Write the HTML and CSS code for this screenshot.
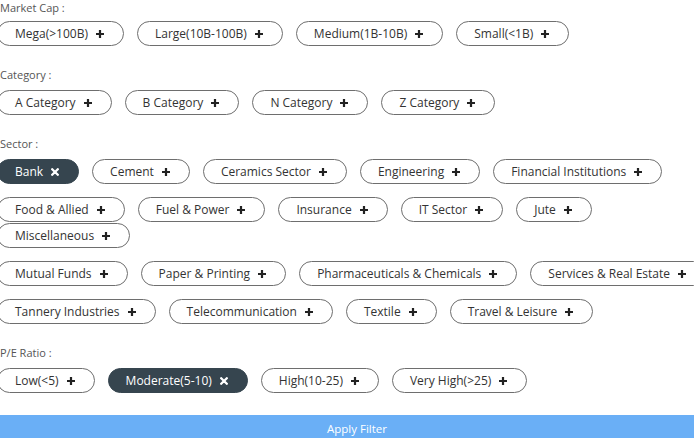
FILE: index.html
```html
<!DOCTYPE html>
<html>
<head>
<meta charset="utf-8">
<link rel="stylesheet" href="styles.css">
</head>
<body>
<div class="page">
  <section class="group first">
    <div class="label">Market Cap :</div>
    <div class="row">
      <span class="chip">Mega(&gt;100B)<svg class="ico" viewBox="0 0 8 8"><path d="M2.9 0h2.2v2.9H8v2.2H5.1V8H2.9V5.1H0V2.9h2.9z"/></svg></span>
      <span class="chip">Large(10B-100B)<svg class="ico" viewBox="0 0 8 8"><path d="M2.9 0h2.2v2.9H8v2.2H5.1V8H2.9V5.1H0V2.9h2.9z"/></svg></span>
      <span class="chip">Medium(1B-10B)<svg class="ico" viewBox="0 0 8 8"><path d="M2.9 0h2.2v2.9H8v2.2H5.1V8H2.9V5.1H0V2.9h2.9z"/></svg></span>
      <span class="chip">Small(&lt;1B)<svg class="ico" viewBox="0 0 8 8"><path d="M2.9 0h2.2v2.9H8v2.2H5.1V8H2.9V5.1H0V2.9h2.9z"/></svg></span>
    </div>
  </section>

  <section class="group">
    <div class="label">Category :</div>
    <div class="row">
      <span class="chip">A Category<svg class="ico" viewBox="0 0 8 8"><path d="M2.9 0h2.2v2.9H8v2.2H5.1V8H2.9V5.1H0V2.9h2.9z"/></svg></span>
      <span class="chip">B Category<svg class="ico" viewBox="0 0 8 8"><path d="M2.9 0h2.2v2.9H8v2.2H5.1V8H2.9V5.1H0V2.9h2.9z"/></svg></span>
      <span class="chip">N Category<svg class="ico" viewBox="0 0 8 8"><path d="M2.9 0h2.2v2.9H8v2.2H5.1V8H2.9V5.1H0V2.9h2.9z"/></svg></span>
      <span class="chip">Z Category<svg class="ico" viewBox="0 0 8 8"><path d="M2.9 0h2.2v2.9H8v2.2H5.1V8H2.9V5.1H0V2.9h2.9z"/></svg></span>
    </div>
  </section>

  <section class="group">
    <div class="label">Sector :</div>
    <div class="row">
      <span class="chip active">Bank<svg class="ico x" viewBox="0 0 8 8"><path d="M1.2 1.2L6.8 6.8M6.8 1.2L1.2 6.8"/></svg></span>
      <span class="chip">Cement<svg class="ico" viewBox="0 0 8 8"><path d="M2.9 0h2.2v2.9H8v2.2H5.1V8H2.9V5.1H0V2.9h2.9z"/></svg></span>
      <span class="chip">Ceramics Sector<svg class="ico" viewBox="0 0 8 8"><path d="M2.9 0h2.2v2.9H8v2.2H5.1V8H2.9V5.1H0V2.9h2.9z"/></svg></span>
      <span class="chip">Engineering<svg class="ico" viewBox="0 0 8 8"><path d="M2.9 0h2.2v2.9H8v2.2H5.1V8H2.9V5.1H0V2.9h2.9z"/></svg></span>
      <span class="chip">Financial Institutions<svg class="ico" viewBox="0 0 8 8"><path d="M2.9 0h2.2v2.9H8v2.2H5.1V8H2.9V5.1H0V2.9h2.9z"/></svg></span>
    </div>
    <div class="row">
      <span class="chip">Food &amp; Allied<svg class="ico" viewBox="0 0 8 8"><path d="M2.9 0h2.2v2.9H8v2.2H5.1V8H2.9V5.1H0V2.9h2.9z"/></svg></span>
      <span class="chip">Fuel &amp; Power<svg class="ico" viewBox="0 0 8 8"><path d="M2.9 0h2.2v2.9H8v2.2H5.1V8H2.9V5.1H0V2.9h2.9z"/></svg></span>
      <span class="chip">Insurance<svg class="ico" viewBox="0 0 8 8"><path d="M2.9 0h2.2v2.9H8v2.2H5.1V8H2.9V5.1H0V2.9h2.9z"/></svg></span>
      <span class="chip">IT Sector<svg class="ico" viewBox="0 0 8 8"><path d="M2.9 0h2.2v2.9H8v2.2H5.1V8H2.9V5.1H0V2.9h2.9z"/></svg></span>
      <span class="chip">Jute<svg class="ico" viewBox="0 0 8 8"><path d="M2.9 0h2.2v2.9H8v2.2H5.1V8H2.9V5.1H0V2.9h2.9z"/></svg></span>
    </div>
    <div class="row tight">
      <span class="chip">Miscellaneous<svg class="ico" viewBox="0 0 8 8"><path d="M2.9 0h2.2v2.9H8v2.2H5.1V8H2.9V5.1H0V2.9h2.9z"/></svg></span>
    </div>
    <div class="row">
      <span class="chip">Mutual Funds<svg class="ico" viewBox="0 0 8 8"><path d="M2.9 0h2.2v2.9H8v2.2H5.1V8H2.9V5.1H0V2.9h2.9z"/></svg></span>
      <span class="chip">Paper &amp; Printing<svg class="ico" viewBox="0 0 8 8"><path d="M2.9 0h2.2v2.9H8v2.2H5.1V8H2.9V5.1H0V2.9h2.9z"/></svg></span>
      <span class="chip">Pharmaceuticals &amp; Chemicals<svg class="ico" viewBox="0 0 8 8"><path d="M2.9 0h2.2v2.9H8v2.2H5.1V8H2.9V5.1H0V2.9h2.9z"/></svg></span>
      <span class="chip">Services &amp; Real Estate<svg class="ico" viewBox="0 0 8 8"><path d="M2.9 0h2.2v2.9H8v2.2H5.1V8H2.9V5.1H0V2.9h2.9z"/></svg></span>
    </div>
    <div class="row">
      <span class="chip">Tannery Industries<svg class="ico" viewBox="0 0 8 8"><path d="M2.9 0h2.2v2.9H8v2.2H5.1V8H2.9V5.1H0V2.9h2.9z"/></svg></span>
      <span class="chip">Telecommunication<svg class="ico" viewBox="0 0 8 8"><path d="M2.9 0h2.2v2.9H8v2.2H5.1V8H2.9V5.1H0V2.9h2.9z"/></svg></span>
      <span class="chip">Textile<svg class="ico" viewBox="0 0 8 8"><path d="M2.9 0h2.2v2.9H8v2.2H5.1V8H2.9V5.1H0V2.9h2.9z"/></svg></span>
      <span class="chip">Travel &amp; Leisure<svg class="ico" viewBox="0 0 8 8"><path d="M2.9 0h2.2v2.9H8v2.2H5.1V8H2.9V5.1H0V2.9h2.9z"/></svg></span>
    </div>
  </section>

  <section class="group last">
    <div class="label">P/E Ratio :</div>
    <div class="row">
      <span class="chip">Low(&lt;5)<svg class="ico" viewBox="0 0 8 8"><path d="M2.9 0h2.2v2.9H8v2.2H5.1V8H2.9V5.1H0V2.9h2.9z"/></svg></span>
      <span class="chip active">Moderate(5-10)<svg class="ico x" viewBox="0 0 8 8"><path d="M1.2 1.2L6.8 6.8M6.8 1.2L1.2 6.8"/></svg></span>
      <span class="chip">High(10-25)<svg class="ico" viewBox="0 0 8 8"><path d="M2.9 0h2.2v2.9H8v2.2H5.1V8H2.9V5.1H0V2.9h2.9z"/></svg></span>
      <span class="chip">Very High(&gt;25)<svg class="ico" viewBox="0 0 8 8"><path d="M2.9 0h2.2v2.9H8v2.2H5.1V8H2.9V5.1H0V2.9h2.9z"/></svg></span>
    </div>
  </section>

  <button class="apply">Apply Filter</button>
</div>
</body>
</html>
```

FILE: styles.css
```css
html, body {
  margin: 0;
  padding: 0;
  background: #ffffff;
  overflow: hidden;
}

.page {
  width: 720px;
  margin-left: -3px;
  font-family: "Open Sans", "DejaVu Sans", sans-serif;
}

.group {
  margin-bottom: 21px;
}

.group.last {
  margin-bottom: 22px;
}

.label {
  font-size: 11px;
  line-height: 16px;
  color: #555555;
  margin: 0 0 7px 3px;
}

.group.first .label {
  margin-bottom: 5px;
}

.row {
  display: flex;
  gap: 13px;
  white-space: nowrap;
}

.row + .row {
  margin-top: 13px;
}

.row.tight {
  margin-top: 1px;
}

.chip {
  flex: none;
  display: inline-flex;
  align-items: center;
  gap: 8px;
  box-sizing: border-box;
  height: 25px;
  padding: 0 19px 0 17px;
  border: 1px solid #6e6e6e;
  border-radius: 13px;
  font-size: 12px;
  color: #333333;
  background: #ffffff;
}

.ico {
  width: 8px;
  height: 8px;
  fill: #222222;
  flex: none;
}

.ico.x {
  fill: none;
  stroke: #ffffff;
  stroke-width: 2.3;
  stroke-linecap: round;
}

.chip.active {
  background: #36454f;
  border-color: #36454f;
  color: #ffffff;
}

.apply {
  display: block;
  width: 100%;
  height: 26px;
  border: none;
  padding: 0;
  background: #6aaff6;
  color: #ffffff;
  font-family: "Open Sans", "DejaVu Sans", sans-serif;
  font-size: 11.5px;
  text-align: center;
}
```
